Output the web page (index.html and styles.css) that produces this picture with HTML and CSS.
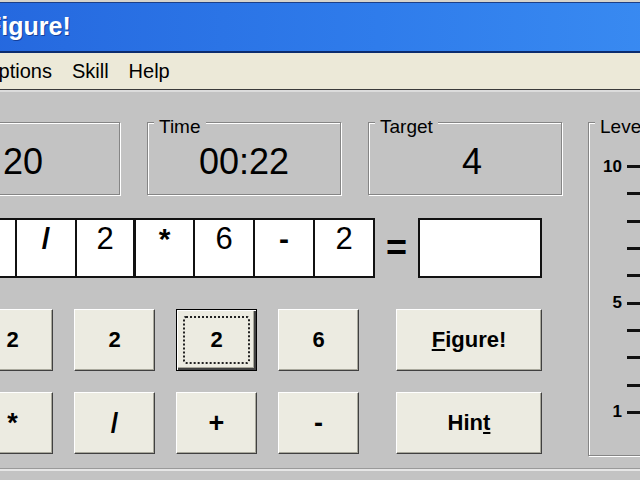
FILE: index.html
```html
<!DOCTYPE html>
<html lang="en">
<head>
    <meta charset="UTF-8">
    <title>Figure!</title>
    <link rel="stylesheet" href="styles.css">
</head>
<body>
<div id="window">
    <div class="titlebar">
        <span class="caption">Figure!</span>
    </div>

    <div class="menubar">
        <span class="menu-item">Options</span>
        <span class="menu-item">Skill</span>
        <span class="menu-item">Help</span>
    </div>

    <div class="client">
        <div class="board">
            <!-- score / time / target -->
            <div class="stats">
                <div class="group stat">
                    <span class="group-label">Score</span>
                    <div class="stat-value">20</div>
                </div>
                <div class="group stat">
                    <span class="group-label">Time</span>
                    <div class="stat-value">00:22</div>
                </div>
                <div class="group stat">
                    <span class="group-label">Target</span>
                    <div class="stat-value target">4</div>
                </div>
            </div>

            <!-- the expression being built -->
            <div class="equation">
                <div class="cells">
                    <span class="cell">2</span>
                    <span class="cell op">/</span>
                    <span class="cell narrow">2</span>
                    <span class="cell op thick">*</span>
                    <span class="cell">6</span>
                    <span class="cell op">-</span>
                    <span class="cell">2</span>
                </div>
                <span class="equals">=</span>
                <div class="answer"></div>
            </div>

            <div class="keys">
                <button class="key">2</button>
                <button class="key">2</button>
                <button class="key focus">2</button>
                <button class="key">6</button>
                <button class="key wide"><u>F</u>igure!</button>

                <button class="key op">*</button>
                <button class="key op">/</button>
                <button class="key op">+</button>
                <button class="key op">-</button>
                <button class="key wide">Hin<u>t</u></button>
            </div>
        </div>

        <div class="group level">
            <span class="group-label">Level</span>
            <div class="scale">
                <div class="step"><span class="mark">10</span><span class="tick"></span></div>
                <div class="step"><span class="mark"></span><span class="tick"></span></div>
                <div class="step"><span class="mark"></span><span class="tick"></span></div>
                <div class="step"><span class="mark"></span><span class="tick"></span></div>
                <div class="step"><span class="mark"></span><span class="tick"></span></div>
                <div class="step"><span class="mark">5</span><span class="tick"></span></div>
                <div class="step"><span class="mark"></span><span class="tick"></span></div>
                <div class="step"><span class="mark"></span><span class="tick"></span></div>
                <div class="step"><span class="mark"></span><span class="tick"></span></div>
                <div class="step"><span class="mark">1</span><span class="tick"></span></div>
            </div>
        </div>
    </div>

    <div class="statusbar"></div>
</div>
</body>
</html>
```

FILE: styles.css
```css
* {
    box-sizing: border-box;
}

html, body {
    margin: 0;
    padding: 0;
    width: 640px;
    height: 480px;
    overflow: hidden;
    background-color: #c3c3c3;
}

/* the window is wider than the shot, its left edge is cut off */
#window {
    width: 780px;
    margin-left: -90px;
    font-family: "Liberation Sans", Arial, sans-serif;
    color: #000;
}

.titlebar {
    height: 53px;
    display: flex;
    align-items: center;
    padding-left: 76px;
    border-top: 2px solid #d6d3cb;
    border-bottom: 2px solid #0c2c6e;
    background: linear-gradient(to right, #2364dc, #2f7ceb 60%, #3a8cf2);
    box-shadow: inset 0 1px 0 #1d3f86;
}

.caption {
    font-size: 25px;
    font-weight: bold;
    color: #fff;
    text-shadow: 1px 1px 0 #15409a;
}

.menubar {
    height: 37px;
    display: flex;
    align-items: center;
    gap: 20px;
    padding-left: 73px;
    background-color: #ece9d8;
    border-bottom: 1px solid #3a3a3a;
    font-size: 20px;
}

.client {
    display: flex;
    padding: 30px 0 13px 16px;
    border-top: 2px solid #dcdcdc;
}

.board {
    display: flex;
    flex-direction: column;
}

/* etched group box */
.group {
    position: relative;
    border: 1px solid #858585;
    box-shadow: inset 1px 1px 0 #fff, 1px 1px 0 #fff;
}

.group-label {
    position: absolute;
    top: -6px;
    left: 6px;
    padding: 0 5px;
    line-height: 20px;
    font-size: 19px;
    background-color: #c3c3c3;
}

.stats {
    display: flex;
    gap: 27px;
}

.stat {
    width: 194px;
    height: 73px;
}

.stat-value {
    margin-top: 19px;
    line-height: 40px;
    font-size: 36px;
    text-align: center;
}

.stat-value.target {
    padding-left: 14px;
}

.equation {
    display: flex;
    margin: 23px 0 0 29px;
}

.cells {
    display: flex;
    height: 60px;
    border: 2px solid #111;
    background-color: #fff;
}

.cell {
    width: 60px;
    padding-top: 3px;
    border-left: 2px solid #111;
    font-size: 31px;
    line-height: 31px;
    text-align: center;
}

.cell:first-child {
    width: 58px;
    border-left: none;
}

.cell.narrow {
    width: 58px;
}

.cell.thick {
    border-left-width: 3px;
}

.cell.op {
    font-weight: bold;
    font-size: 30px;
}

.equals {
    width: 43px;
    font-size: 36px;
    font-weight: bold;
    line-height: 60px;
    text-align: center;
}

.answer {
    width: 124px;
    height: 60px;
    border: 2px solid #111;
    background-color: #fff;
}

.keys {
    display: grid;
    grid-template-columns: repeat(4, 81px) 162px;
    grid-auto-rows: 62px;
    column-gap: 21px;
    row-gap: 21px;
    margin: 31px 0 0 46px;
}

.key {
    padding: 0;
    font-family: "Liberation Sans", Arial, sans-serif;
    font-size: 22px;
    font-weight: bold;
    color: #000;
    background-color: #ecebe1;
    border: 1px solid;
    border-color: #fff #404040 #404040 #fff;
    box-shadow: inset -1px -1px 0 #a9a89c;
}

.key u {
    text-decoration-thickness: 2px;
    text-underline-offset: 2px;
}

.key.op {
    font-size: 27px;
}

.key.wide {
    width: 146px;
    justify-self: end;
}

.key.focus {
    position: relative;
    border-color: #000;
    box-shadow: inset 1px 1px 0 #fff, inset -2px -2px 0 #404040, inset -3px -3px 0 #a9a89c;
}

.key.focus::after {
    content: "";
    position: absolute;
    top: 6px;
    left: 6px;
    right: 6px;
    bottom: 6px;
    border: 2px dotted #222;
    border-radius: 3px;
}

.level {
    width: 130px;
    height: 334px;
    margin-left: 26px;
}

.scale {
    margin-top: 30px;
}

.step {
    display: flex;
    align-items: center;
    height: 27.3px;
}

.mark {
    width: 33px;
    text-align: right;
    font-size: 17px;
    font-weight: bold;
}

.tick {
    width: 30px;
    height: 3px;
    margin-left: 5px;
    background-color: #111;
}

.statusbar {
    height: 20px;
    border-top: 2px solid #e6e6e6;
    box-shadow: 0 -1px 0 #9a9a9a;
}
```
